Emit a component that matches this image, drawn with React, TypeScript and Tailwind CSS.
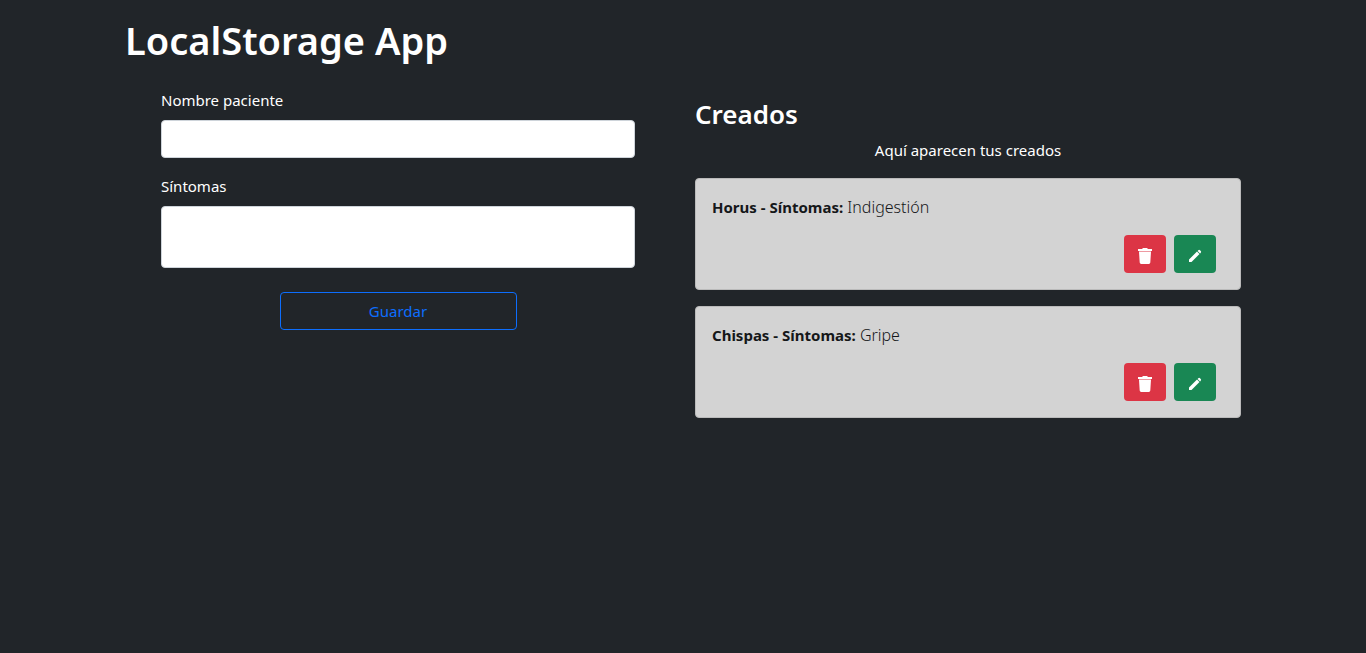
import { useState } from "react";

type Patient = { id: number; name: string; symptoms: string };

const initialPatients: Patient[] = [
  { id: 1, name: "Horus", symptoms: "Indigestión" },
  { id: 2, name: "Chispas", symptoms: "Gripe" },
];

const fieldClass =
  "block w-full rounded border border-[#ced4da] bg-white px-3 py-1.5 text-[15px] leading-6 text-[#212529]";

function TrashIcon() {
  return (
    <svg viewBox="0 0 16 16" className="size-4" fill="currentColor" aria-hidden="true">
      <path d="M6 0h4l1 1h4v2H1V1h4zM2 3.6h12L13.3 14.6A1.5 1.5 0 0 1 11.8 16H4.2a1.5 1.5 0 0 1-1.5-1.4z" />
    </svg>
  );
}

function PencilIcon() {
  return (
    <svg viewBox="0 0 16 16" className="size-4" fill="currentColor" aria-hidden="true">
      <path d="M2 14v-2.5l8-8L12.5 6l-8 8zM10.6 2.9l.7-.6a1.2 1.2 0 0 1 1.7 0l.7.7a1.2 1.2 0 0 1 0 1.7l-.6.7z" />
    </svg>
  );
}

function PatientCard({ patient, onDelete, onEdit }: { patient: Patient; onDelete: () => void; onEdit: () => void }) {
  return (
    <li className="rounded border border-[#bababa] bg-[#d3d3d3] p-4 text-[#151719]">
      <p className="text-base font-light">
        <strong className="text-[15px] font-bold">{patient.name} - Síntomas:</strong> {patient.symptoms}
      </p>
      <div className="mt-4 flex justify-end gap-2 pr-2">
        <button type="button" aria-label="Eliminar" onClick={onDelete} className="flex h-[38px] w-[42px] items-center justify-center rounded bg-[#dc3545] pt-1 text-white">
          <TrashIcon />
        </button>
        <button type="button" aria-label="Editar" onClick={onEdit} className="flex h-[38px] w-[42px] items-center justify-center rounded bg-[#198754] pt-1 text-white">
          <PencilIcon />
        </button>
      </div>
    </li>
  );
}

export default function App() {
  const [patients, setPatients] = useState(initialPatients);
  const [name, setName] = useState("");
  const [symptoms, setSymptoms] = useState("");

  const remove = (id: number) => setPatients((list) => list.filter((p) => p.id !== id));

  return (
    <div className="min-h-screen bg-[#212529] font-['Noto_Sans','Liberation_Sans',sans-serif] text-[15px] leading-6 text-white">
      <main className="mx-auto max-w-[1140px] px-3 pt-4">
        <h1 className="text-[38px] leading-12 font-semibold">LocalStorage App</h1>
        <div className="grid grid-cols-2 gap-6">
          <form
            className="px-9 pt-6"
            onSubmit={(e) => {
              e.preventDefault();
              if (!name.trim()) return;
              setPatients((list) => [...list, { id: Date.now(), name, symptoms }]);
              setName("");
              setSymptoms("");
            }}
          >
            <label htmlFor="name" className="mb-2 block">Nombre paciente</label>
            <input id="name" value={name} onChange={(e) => setName(e.target.value)} className={`${fieldClass} mb-4`} />
            <label htmlFor="symptoms" className="mb-2 block">Síntomas</label>
            <textarea id="symptoms" rows={2} value={symptoms} onChange={(e) => setSymptoms(e.target.value)} className={`${fieldClass} h-[62px] resize-none`} />
            <button type="submit" className="mx-auto mt-6 block w-1/2 rounded border border-[#0d6efd] px-3 py-1.5 text-[#0d6efd]">
              Guardar
            </button>
          </form>
          <section className="pt-[34px]">
            <h2 className="mb-2 text-[26px] leading-8 font-semibold">Creados</h2>
            <p className="mb-4 text-center">Aquí aparecen tus creados</p>
            <ul className="flex flex-col gap-4">
              {patients.map((patient) => (
                <PatientCard
                  key={patient.id}
                  patient={patient}
                  onDelete={() => remove(patient.id)}
                  onEdit={() => {
                    setName(patient.name);
                    setSymptoms(patient.symptoms);
                    remove(patient.id);
                  }}
                />
              ))}
            </ul>
          </section>
        </div>
      </main>
    </div>
  );
}
